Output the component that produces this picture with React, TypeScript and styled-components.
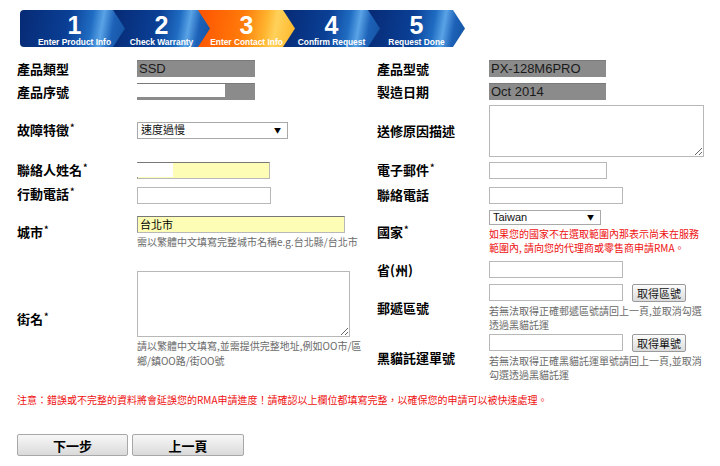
import styled, { createGlobalStyle } from 'styled-components'

const GlobalStyle = createGlobalStyle`
    html, body {
        margin: 0;
        padding: 0;
        background: #ffffff;
    }
    body {
        font-family: "Noto Sans CJK TC", "Liberation Sans", sans-serif;
        color: #000;
    }
`

const Page = styled.div`
    width: 720px;
    height: 466px;
    padding: 10px 0 0 17px;
    box-sizing: border-box;
    overflow: hidden;
`

// Step bar
const Steps = styled.div`
    display: flex;
    margin-left: 3px;
    height: 37px;
`

const Step = styled.div<{ $active?: boolean; $first?: boolean; $z: number }>`
    position: relative;
    z-index: ${p => p.$z};
    width: ${p => (p.$first ? 105 : 97)}px;
    margin-left: ${p => (p.$first ? 0 : -12)}px;
    padding-left: ${p => (p.$first ? 16 : 12)}px;
    padding-right: 12px;
    box-sizing: border-box;
    height: 37px;
    display: flex;
    flex-direction: column;
    align-items: center;
    clip-path: polygon(0 0, calc(100% - 12px) 0, 100% 50%, calc(100% - 12px) 100%, 0 100%);
    border-radius: ${p => (p.$first ? '4px 0 0 4px' : '0')};
    background: ${p =>
        p.$active
            ? 'linear-gradient(100deg, #ff5200 0%, #ff7a0a 45%, #ffb42e 68%, #ffd15a 78%, #ffb526 100%)'
            : 'linear-gradient(100deg, #072a74 0%, #0a3f95 45%, #1f6cc2 66%, #5aa3e6 76%, #1d62b8 86%, #13519f 100%)'};
    color: #fff;
    font-family: "Liberation Sans", Arial, sans-serif;
    font-weight: bold;
`

const StepNum = styled.div`
    font-size: 25px;
    line-height: 25px;
    margin-top: 3px;
`

const StepLabel = styled.div`
    font-size: 8.4px;
    line-height: 9px;
    white-space: nowrap;
`

// Form grid
const Form = styled.div`
    display: grid;
    grid-template-columns: 120px 240px 112px 1fr;
    grid-template-rows: 23px 23px 55px 25px 24px 51px 23px 54px 46px;
    margin-top: 10px;
`

const Label = styled.div<{ $span?: number }>`
    align-self: center;
    font-size: 13px;
    font-weight: bold;
    line-height: 16px;
    white-space: nowrap;
    grid-row: ${p => (p.$span ? `span ${p.$span}` : 'auto')};
`

const Req = styled.span`
    font-size: 9px;
    position: relative;
    top: -4px;
    margin-left: 1px;
`

const Cell = styled.div<{ $span?: number }>`
    align-self: center;
    display: flex;
    flex-direction: column;
    align-items: flex-start;
    grid-row: ${p => (p.$span ? `span ${p.$span}` : 'auto')};
`

const ReadBox = styled.div<{ $w: number }>`
    position: relative;
    width: ${p => p.$w}px;
    height: 17px;
    background: #8b8b8b;
    border-top: 1px solid #7a7a7a;
    box-sizing: border-box;
    font-family: "Liberation Sans", Arial, sans-serif;
    font-size: 13px;
    line-height: 16px;
    color: #1a1a1a;
    padding-left: 2px;
`

const WhiteMask = styled.span<{ $w: number }>`
    position: absolute;
    left: 0;
    top: 0;
    width: ${p => p.$w}px;
    height: 13px;
    background: #fff;
`

const TextInput = styled.input<{ $w: number; $yellow?: boolean }>`
    display: block;
    width: ${p => p.$w}px;
    height: 17px;
    box-sizing: border-box;
    margin: 0;
    padding: 0 2px;
    border: 1px solid #b8b8b8;
    border-top-color: ${p => (p.$yellow ? '#777' : '#b8b8b8')};
    border-left-color: ${p => (p.$yellow ? '#999' : '#b8b8b8')};
    background: ${p => (p.$yellow ? '#fdfdb6' : '#fff')};
    font-family: "Noto Sans CJK TC", sans-serif;
    font-size: 11px;
    color: #000;
    outline: none;
`

const MaskedField = styled.div`
    position: relative;
`

const NameMask = styled.span`
    position: absolute;
    left: 0;
    top: 1px;
    width: 36px;
    height: 14px;
    background: #fff;
`

const SelectWrap = styled.div<{ $w: number; $h: number }>`
    position: relative;
    width: ${p => p.$w}px;
    height: ${p => p.$h}px;
    line-height: 0;
`

const Select = styled.select<{ $h: number }>`
    appearance: none;
    display: block;
    width: 100%;
    height: ${p => p.$h}px;
    min-height: 0;
    box-sizing: border-box;
    margin: 0;
    padding: 0 0 0 3px;
    border: 1px solid #a9a9a9;
    border-radius: 0;
    background: #fff;
    font-family: "Liberation Sans", "Noto Sans CJK TC", sans-serif;
    font-size: 11px;
    font-weight: normal;
    line-height: ${p => p.$h - 2}px;
    color: #111;
`

const Arrow = styled.span`
    position: absolute;
    right: 7px;
    top: 0;
    height: 100%;
    display: flex;
    align-items: center;
    font-size: 7px;
    line-height: 7px;
    color: #000;
    pointer-events: none;
`

const Area = styled.textarea<{ $w: number; $h: number }>`
    display: block;
    width: ${p => p.$w}px;
    height: ${p => p.$h}px;
    box-sizing: border-box;
    margin: 0;
    border: 1px solid #b8b8b8;
    background: #fff;
    resize: both;
    outline: none;
`

const Hint = styled.div<{ $red?: boolean }>`
    font-size: 10px;
    line-height: 14.5px;
    color: ${p => (p.$red ? '#ee1111' : '#6a6a6a')};
    white-space: nowrap;
    margin-top: 2px;
`

const InlineRow = styled.div`
    display: flex;
    align-items: center;
    gap: 9px;
`

const SmallButton = styled.button`
    width: 54px;
    height: 18px;
    margin: 0;
    padding: 0;
    border: 1px solid #9a9a9a;
    border-radius: 2px;
    background: linear-gradient(#fbfbfb, #dcdcdc);
    font-family: "Noto Sans CJK TC", sans-serif;
    font-size: 11px;
    line-height: 16px;
    color: #111;
`

const Note = styled.div`
    margin-top: 12px;
    font-size: 10px;
    line-height: 14px;
    color: #ee1111;
    white-space: nowrap;
`

const Buttons = styled.div`
    display: flex;
    gap: 4px;
    margin-top: 27px;
`

const NavButton = styled.button<{ $w: number }>`
    width: ${p => p.$w}px;
    height: 22px;
    margin: 0;
    padding: 0;
    border: 1px solid #a8a8a8;
    border-radius: 2px;
    background: linear-gradient(#f7f7f7, #dadada);
    font-family: "Noto Sans CJK TC", sans-serif;
    font-size: 13px;
    font-weight: bold;
    color: #000;
`

const steps = [
    { n: '1', label: 'Enter Product Info' },
    { n: '2', label: 'Check Warranty' },
    { n: '3', label: 'Enter Contact Info', active: true },
    { n: '4', label: 'Confirm Request' },
    { n: '5', label: 'Request Done' },
]

function Dropdown({ w, h, value }: { w: number; h: number; value: string }) {
    return (
        <SelectWrap $w={w} $h={h}>
            <Select $h={h} defaultValue={value}>
                <option>{value}</option>
            </Select>
            <Arrow>▼</Arrow>
        </SelectWrap>
    )
}

export default function App() {
    return (
        <Page>
            <GlobalStyle />
            <Steps>
                {steps.map((s, i) => (
                    <Step key={s.n} $first={i === 0} $active={s.active} $z={10 - i}>
                        <StepNum>{s.n}</StepNum>
                        <StepLabel>{s.label}</StepLabel>
                    </Step>
                ))}
            </Steps>

            <Form>
                <Label>產品類型</Label>
                <Cell><ReadBox $w={118}>SSD</ReadBox></Cell>
                <Label>產品型號</Label>
                <Cell><ReadBox $w={117}>PX-128M6PRO</ReadBox></Cell>

                <Label>產品序號</Label>
                <Cell><ReadBox $w={118}><WhiteMask $w={88} /></ReadBox></Cell>
                <Label>製造日期</Label>
                <Cell><ReadBox $w={117}>Oct 2014</ReadBox></Cell>

                <Label>故障特徵<Req>*</Req></Label>
                <Cell><Dropdown w={151} h={17} value="速度過慢" /></Cell>
                <Label>送修原因描述</Label>
                <Cell><Area $w={215} $h={52} /></Cell>

                <Label>聯絡人姓名<Req>*</Req></Label>
                <Cell>
                    <MaskedField>
                        <TextInput $w={133} $yellow />
                        <NameMask />
                    </MaskedField>
                </Cell>
                <Label>電子郵件<Req>*</Req></Label>
                <Cell><TextInput $w={118} /></Cell>

                <Label>行動電話<Req>*</Req></Label>
                <Cell><TextInput $w={134} /></Cell>
                <Label>聯絡電話</Label>
                <Cell><TextInput $w={134} /></Cell>

                <Label>城市<Req>*</Req></Label>
                <Cell>
                    <TextInput $w={208} $yellow defaultValue="台北市" />
                    <Hint>需以繁體中文填寫完整城市名稱e.g.台北縣/台北市</Hint>
                </Cell>
                <Label>國家<Req>*</Req></Label>
                <Cell>
                    <Dropdown w={112} h={15} value="Taiwan" />
                    <Hint $red>
                        如果您的國家不在選取範圍內那表示尚未在服務<br />
                        範圍內, 請向您的代理商或零售商申請RMA。
                    </Hint>
                </Cell>

                <Label $span={3}>街名<Req>*</Req></Label>
                <Cell $span={3}>
                    <Area $w={213} $h={66} />
                    <Hint>
                        請以繁體中文填寫,並需提供完整地址,例如OO市/區<br />
                        鄉/鎮OO路/街OO號
                    </Hint>
                </Cell>
                <Label>省(州)</Label>
                <Cell><TextInput $w={134} /></Cell>

                <Label>郵遞區號</Label>
                <Cell>
                    <InlineRow>
                        <TextInput $w={134} />
                        <SmallButton>取得區號</SmallButton>
                    </InlineRow>
                    <Hint>
                        若無法取得正確郵遞區號請回上一頁,並取消勾選<br />
                        透過黑貓託運
                    </Hint>
                </Cell>

                <Label>黑貓託運單號</Label>
                <Cell>
                    <InlineRow>
                        <TextInput $w={134} />
                        <SmallButton>取得單號</SmallButton>
                    </InlineRow>
                    <Hint>
                        若無法取得正確黑貓託運單號請回上一頁,並取消<br />
                        勾選透過黑貓託運
                    </Hint>
                </Cell>
            </Form>

            <Note>注意：錯誤或不完整的資料將會延誤您的RMA申請進度！請確認以上欄位都填寫完整，以確保您的申請可以被快速處理。</Note>

            <Buttons>
                <NavButton $w={111}>下一步</NavButton>
                <NavButton $w={112}>上一頁</NavButton>
            </Buttons>
        </Page>
    )
}
